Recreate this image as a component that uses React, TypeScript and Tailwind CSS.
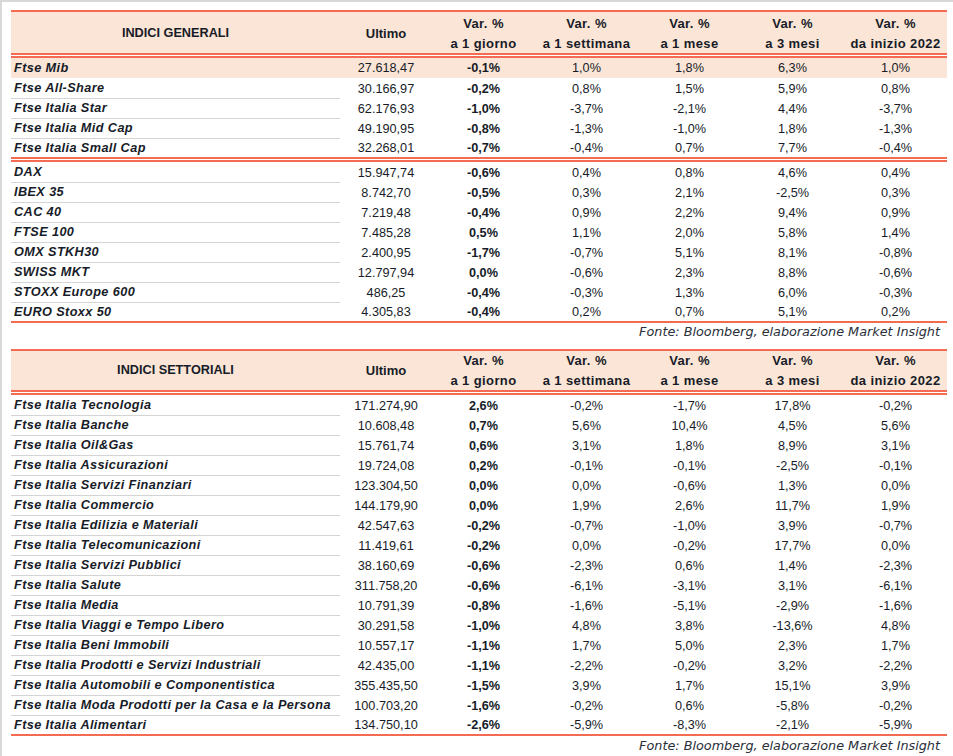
type Row = [string, string, string, string, string, string, string];

const generali: Row[][] = [
  [
    ['Ftse Mib', '27.618,47', '-0,1%', '1,0%', '1,8%', '6,3%', '1,0%'],
    ['Ftse All-Share', '30.166,97', '-0,2%', '0,8%', '1,5%', '5,9%', '0,8%'],
    ['Ftse Italia Star', '62.176,93', '-1,0%', '-3,7%', '-2,1%', '4,4%', '-3,7%'],
    ['Ftse Italia Mid Cap', '49.190,95', '-0,8%', '-1,3%', '-1,0%', '1,8%', '-1,3%'],
    ['Ftse Italia Small Cap', '32.268,01', '-0,7%', '-0,4%', '0,7%', '7,7%', '-0,4%'],
  ],
  [
    ['DAX', '15.947,74', '-0,6%', '0,4%', '0,8%', '4,6%', '0,4%'],
    ['IBEX 35', '8.742,70', '-0,5%', '0,3%', '2,1%', '-2,5%', '0,3%'],
    ['CAC 40', '7.219,48', '-0,4%', '0,9%', '2,2%', '9,4%', '0,9%'],
    ['FTSE 100', '7.485,28', '0,5%', '1,1%', '2,0%', '5,8%', '1,4%'],
    ['OMX STKH30', '2.400,95', '-1,7%', '-0,7%', '5,1%', '8,1%', '-0,8%'],
    ['SWISS MKT', '12.797,94', '0,0%', '-0,6%', '2,3%', '8,8%', '-0,6%'],
    ['STOXX Europe 600', '486,25', '-0,4%', '-0,3%', '1,3%', '6,0%', '-0,3%'],
    ['EURO Stoxx 50', '4.305,83', '-0,4%', '0,2%', '0,7%', '5,1%', '0,2%'],
  ],
];

const settoriali: Row[][] = [
  [
    ['Ftse Italia Tecnologia', '171.274,90', '2,6%', '-0,2%', '-1,7%', '17,8%', '-0,2%'],
    ['Ftse Italia Banche', '10.608,48', '0,7%', '5,6%', '10,4%', '4,5%', '5,6%'],
    ['Ftse Italia Oil&Gas', '15.761,74', '0,6%', '3,1%', '1,8%', '8,9%', '3,1%'],
    ['Ftse Italia Assicurazioni', '19.724,08', '0,2%', '-0,1%', '-0,1%', '-2,5%', '-0,1%'],
    ['Ftse Italia Servizi Finanziari', '123.304,50', '0,0%', '0,0%', '-0,6%', '1,3%', '0,0%'],
    ['Ftse Italia Commercio', '144.179,90', '0,0%', '1,9%', '2,6%', '11,7%', '1,9%'],
    ['Ftse Italia Edilizia e Materiali', '42.547,63', '-0,2%', '-0,7%', '-1,0%', '3,9%', '-0,7%'],
    ['Ftse Italia Telecomunicazioni', '11.419,61', '-0,2%', '0,0%', '-0,2%', '17,7%', '0,0%'],
    ['Ftse Italia Servizi Pubblici', '38.160,69', '-0,6%', '-2,3%', '0,6%', '1,4%', '-2,3%'],
    ['Ftse Italia Salute', '311.758,20', '-0,6%', '-6,1%', '-3,1%', '3,1%', '-6,1%'],
    ['Ftse Italia Media', '10.791,39', '-0,8%', '-1,6%', '-5,1%', '-2,9%', '-1,6%'],
    ['Ftse Italia Viaggi e Tempo Libero', '30.291,58', '-1,0%', '4,8%', '3,8%', '-13,6%', '4,8%'],
    ['Ftse Italia Beni Immobili', '10.557,17', '-1,1%', '1,7%', '5,0%', '2,3%', '1,7%'],
    ['Ftse Italia Prodotti e Servizi Industriali', '42.435,00', '-1,1%', '-2,2%', '-0,2%', '3,2%', '-2,2%'],
    ['Ftse Italia Automobili e Componentistica', '355.435,50', '-1,5%', '3,9%', '1,7%', '15,1%', '3,9%'],
    ['Ftse Italia Moda Prodotti per la Casa e la Persona', '100.703,20', '-1,6%', '-0,2%', '0,6%', '-5,8%', '-0,2%'],
    ['Ftse Italia Alimentari', '134.750,10', '-2,6%', '-5,9%', '-8,3%', '-2,1%', '-5,9%'],
  ],
];

const periods = ['a 1 giorno', 'a 1 settimana', 'a 1 mese', 'a 3 mesi', 'da inizio 2022'];

const DataRow = ({ row, last, highlight }: { row: Row; last: boolean; highlight?: boolean }) => (
  <div
    className={
      'grid grid-cols-[329px_92px_repeat(5,103px)] ' +
      (last ? 'h-[19px] ' : 'h-[20px] ') +
      (highlight ? 'bg-[#fbe5d6]' : '')
    }
  >
    <div
      className={
        'flex items-center pl-[3px] pt-px font-bold italic text-[12.7px] tracking-[0.4px] ' +
        (last || highlight ? '' : 'border-b border-[#d4d4d4]')
      }
    >
      {row[0]}
    </div>
    <div className="flex items-center justify-center pt-px text-[12.7px]">{row[1]}</div>
    <div className="flex items-center justify-center pt-px text-[12.7px] font-bold">{row[2]}</div>
    {row.slice(3).map((v, i) => (
      <div key={i} className="flex items-center justify-center pt-px text-[12.7px]">
        {v}
      </div>
    ))}
  </div>
);

const IndexTable = ({ title, groups, tall }: { title: string; groups: Row[][]; tall: boolean }) => (
  <div className="w-[936px]">
    <div
      className={
        'grid grid-cols-[329px_92px_repeat(5,103px)] items-center border-t-2 border-b-[5px] border-double border-[#f26b52] bg-[#fbe5d6] bg-clip-padding font-bold ' +
        (tall ? 'h-[48px] pt-[2px]' : 'h-[46px]')
      }
    >
      <div className="text-center text-[12.7px]">{title}</div>
      <div className="text-center text-[13px]">Ultimo</div>
      {periods.map((p) => (
        <div key={p} className="text-center text-[13px] leading-[20px] tracking-[0.4px]">
          <div>Var. %</div>
          <div>{p}</div>
        </div>
      ))}
    </div>
    {groups.map((g, gi) => (
      <div key={gi}>
        {g.map((r, ri) => (
          <DataRow key={r[0]} row={r} last={ri === g.length - 1} highlight={tall && gi === 0 && ri === 0} />
        ))}
        {gi < groups.length - 1 ? (
          <div className="h-[5px] border-y-2 border-[#f26b52]" />
        ) : (
          <div className="h-[2px] bg-[#f26b52]" />
        )}
      </div>
    ))}
  </div>
);

const Fonte = ({ className }: { className: string }) => (
  <div
    className={
      "w-[936px] text-right pr-[7px] italic text-[12.8px] text-[#2a2f3a] font-['DejaVu_Sans',sans-serif] " +
      className
    }
  >
    Fonte: Bloomberg, elaborazione Market Insight
  </div>
);

export default function App() {
  return (
    <div className="w-[953px] h-[756px] overflow-hidden bg-white border-t-2 border-l-2 border-[#d8d8d8] pl-[9px] pt-[8px] text-[#171c28] font-['Liberation_Sans',Arial,sans-serif]">
      <IndexTable title="INDICI GENERALI" groups={generali} tall />
      <Fonte className="h-[18px] leading-[18px] mb-[8px]" />
      <IndexTable title="INDICI SETTORIALI" groups={settoriali} tall={false} />
      <Fonte className="h-[20px] leading-[20px]" />
    </div>
  );
}
